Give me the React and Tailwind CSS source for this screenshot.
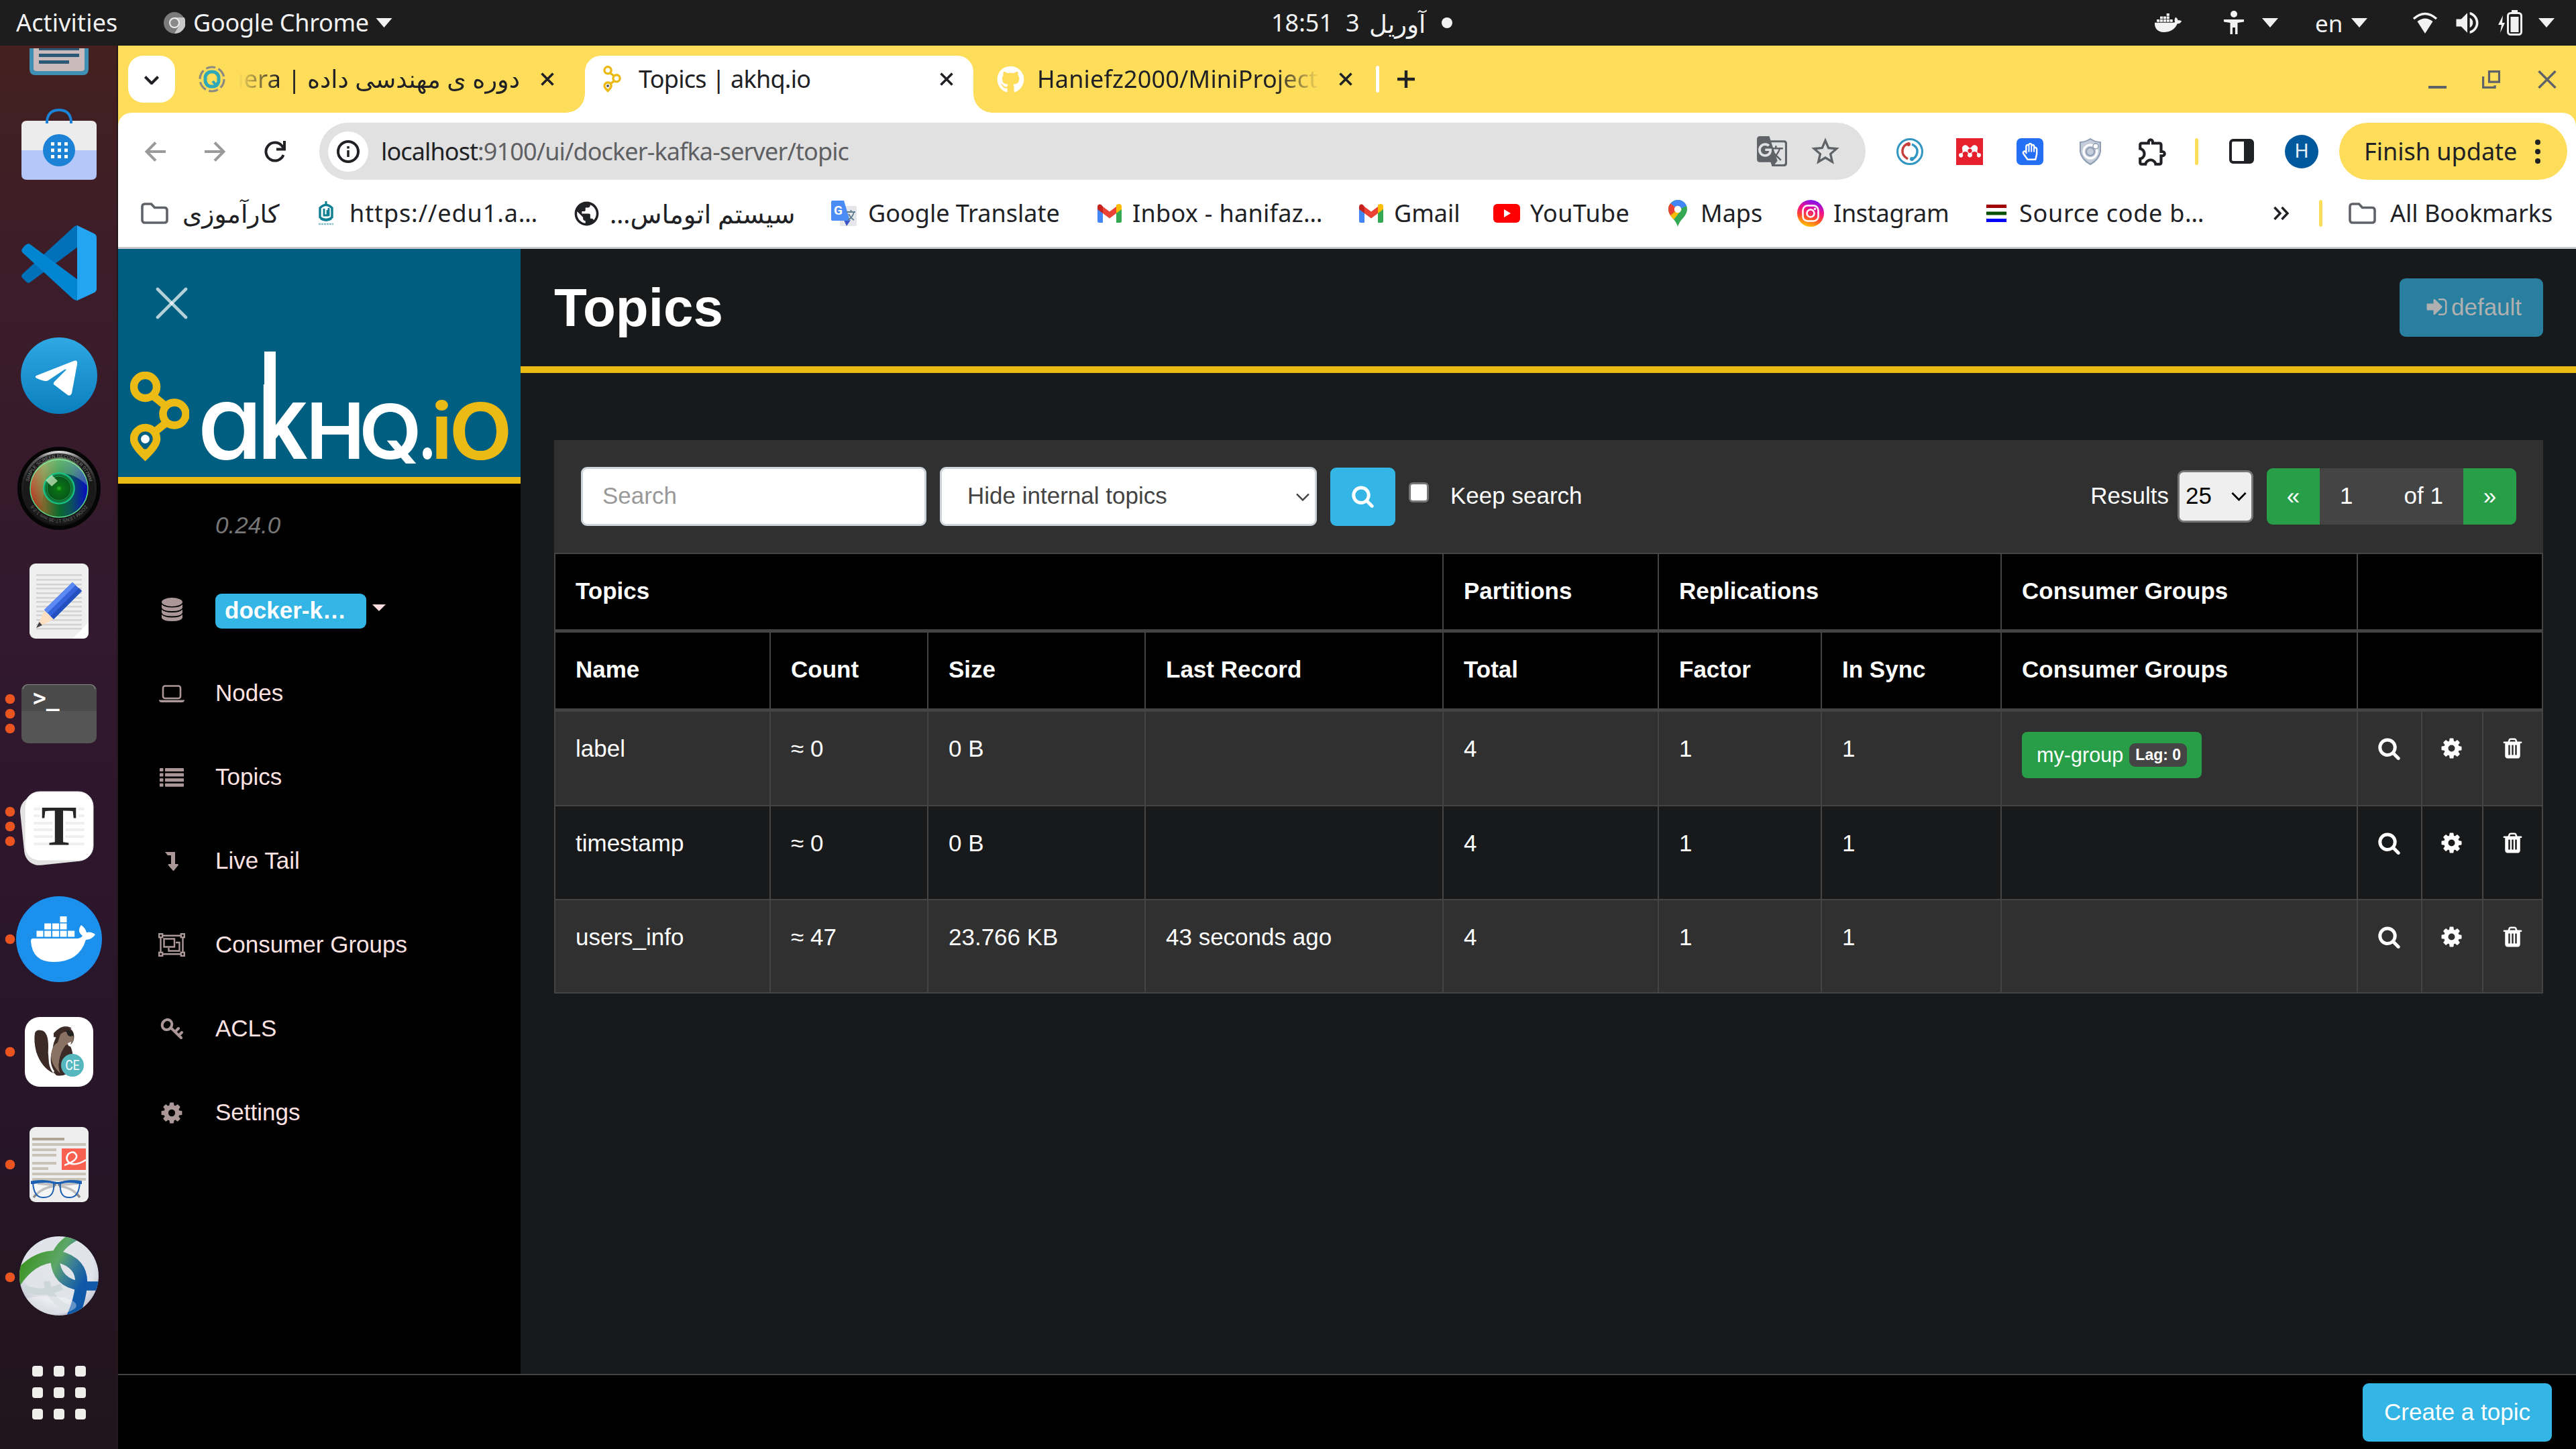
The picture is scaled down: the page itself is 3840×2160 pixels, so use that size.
import React from "react";
import { FaGithub, FaDocker, FaMendeley, FaRegHandPaper } from "react-icons/fa";
import { MdGTranslate, MdStarBorder, MdOutlineExtension, MdPublic, MdVolumeUp } from "react-icons/md";

/* ---------- Shared glyphs ---------- */

const FA = {
  search:
    "M1216 832q0-185-131.5-316.5t-316.5-131.5-316.5 131.5-131.5 316.5 131.5 316.5 316.5 131.5 316.5-131.5 131.5-316.5zm512 832q0 52-38 90t-90 38q-54 0-90-38l-343-342q-179 124-399 124-143 0-273.5-55.5t-225-150-150-225-55.5-273.5 55.5-273.5 150-225 225-150 273.5-55.5 273.5 55.5 225 150 150 225 55.5 273.5q0 220-124 399l343 343q37 37 37 90z",
  cog:
    "M1152 896q0-106-75-181t-181-75-181 75-75 181 75 181 181 75 181-75 75-181zm512-109v222q0 12-8 23t-20 13l-185 28q-19 54-39 91 35 50 107 138 10 12 10 25t-9 23q-27 37-99 108t-94 71q-12 0-26-9l-138-108q-44 23-91 38-16 136-29 186-7 28-36 28h-222q-14 0-24.5-8.5t-11.5-21.5l-28-184q-49-16-90-37l-141 107q-10 9-25 9-14 0-25-11-126-114-165-168-7-10-7-23 0-12 8-23 15-21 51-66.5t54-70.5q-27-50-41-99l-183-27q-13-2-21-12.5t-8-23.5v-222q0-12 8-23t19-13l186-28q14-46 39-92-40-57-107-138-10-12-10-24 0-10 9-23 26-36 98.5-107.5t94.5-71.5q13 0 26 10l138 107q44-23 91-38 16-136 29-186 7-28 36-28h222q14 0 24.5 8.5t11.5 21.5l28 184q49 16 90 37l142-107q9-9 24-9 13 0 25 10 129 119 165 170 7 8 7 22 0 12-8 23-15 21-51 66.5t-54 70.5q26 50 41 98l183 28q13 2 21 12.5t8 23.5z",
  trash:
    "M704 1376v-704q0-14-9-23t-23-9h-64q-14 0-23 9t-9 23v704q0 14 9 23t23 9h64q14 0 23-9t9-23zm256 0v-704q0-14-9-23t-23-9h-64q-14 0-23 9t-9 23v704q0 14 9 23t23 9h64q14 0 23-9t9-23zm256 0v-704q0-14-9-23t-23-9h-64q-14 0-23 9t-9 23v704q0 14 9 23t23 9h64q14 0 23-9t9-23zm-544-992h448l-48-117q-7-9-17-11h-317q-10 2-17 11zm928 32v64q0 14-9 23t-23 9h-96v948q0 83-47 143.5t-113 60.5h-832q-66 0-113-58.5t-47-141.5v-952h-96q-14 0-23-9t-9-23v-64q0-14 9-23t23-9h309l70-167q15-37 54-63t79-26h320q40 0 79 26t54 63l70 167h309q14 0 23 9t9 23z",
  signIn:
    "M1312 896q0 26-19 45l-544 544q-19 19-45 19t-45-19-19-45v-288h-448q-26 0-45-19t-19-45v-384q0-26 19-45t45-19h448v-288q0-26 19-45t45-19 45 19l544 544q19 19 19 45zm352-352v704q0 119-84.5 203.5t-203.5 84.5h-320q-13 0-22.5-9.5t-9.5-22.5q0-4-1-20t-.5-26.5 3-23.5 10-19.5 20.5-6.5h320q66 0 113-47t47-113v-704q0-66-47-113t-113-47h-312l-11.5-1-11.5-3-8-5.5-7-9-2-13.5q0-4-1-20t-.5-26.5 3-23.5 10-19.5 20.5-6.5h320q119 0 203.5 84.5t84.5 203.5z",
};

const Fa4 = ({ d, className }) => (
  <svg viewBox="0 0 1792 1792" className={className} fill="currentColor">
    <path d={d} />
  </svg>
);

const Caret = ({ className }) => (
  <svg viewBox="0 0 24 14" className={className} fill="#f2f2f2">
    <path d="M0 0h24L12 14z" />
  </svg>
);

const CloseX = ({ className }) => (
  <svg viewBox="0 0 20 20" className={className} stroke="#202124" strokeWidth="3.6" fill="none">
    <path d="M1.5 1.5l17 17M18.5 1.5l-17 17" />
  </svg>
);

const Chevron = ({ className, color, w }) => (
  <svg viewBox="0 0 24 14" className={className} stroke={color} strokeWidth={w} fill="none">
    <path d="M1.5 1.5L12 12.2 22.5 1.5" />
  </svg>
);

/* ---------- GNOME top bar ---------- */

function TopBar() {
  return (
    <header className="flex h-[68px] w-full shrink-0 items-center bg-[#1d1d1d] text-[36px] leading-none text-[#f2f2f2]">
      <div className="flex w-[1894px] items-center pl-[24px]">
        <span className="w-[220px] whitespace-nowrap tracking-[0.15px]">Activities</span>
        <svg viewBox="0 0 32 32" className="size-[32px]">
          <circle cx="16" cy="16" r="16" fill="#7b7b7b" />
          <path d="M16 8h14.500A16 16 0 0 1 16 32l7-12z" fill="#c9c9c9" />
          <circle cx="16" cy="16" r="8" fill="#eee" />
          <circle cx="16" cy="16" r="6" fill="#8a8a8a" />
        </svg>
        <span className="ml-[12px] w-[272px] whitespace-nowrap tracking-[-0.3px]">Google Chrome</span>
        <Caret className="h-[14px] w-[25px]" />
      </div>
      <div className="flex w-[272px] items-center">
        <span className="w-[112px] pl-[1px]">18:51</span>
        <span className="w-[35px]">3</span>
        <span className="w-[96px] text-[37px]">آوریل</span>
        <span className="ml-[12px] size-[16px] shrink-0 rounded-full bg-[#f2f2f2]" />
      </div>
      <div className="flex w-[1674px] items-center justify-end pr-[32px]">
        <FaDocker className="size-[40px]" />
        <svg viewBox="0 0 30 36" className="ml-[63px] h-[36px] w-[30px]" fill="#f2f2f2">
          <circle cx="15" cy="5" r="5" />
          <path d="M0 13h30v3.500l-9.500 1.500v17h-3.500v-10h-4v10H9.500V18L0 16.500z" />
        </svg>
        <Caret className="ml-[27px] h-[14px] w-[24px]" />
        <span className="ml-[55px] w-[54px] text-[35px]">en</span>
        <Caret className="h-[14px] w-[24px]" />
        <svg viewBox="0 0 38 32" className="ml-[67px] h-[32px] w-[38px]" fill="#f2f2f2">
          <path d="M2 10Q19-5 36 10" fill="none" stroke="#f2f2f2" strokeWidth="3.500" />
          <path d="M7.500 14Q19 5 30.500 14L19 32z" />
        </svg>
        <MdVolumeUp className="ml-[22px] size-[44px]" />
        <svg viewBox="0 0 36 38" className="ml-[24px] h-[38px] w-[36px]">
          <path d="M7 8L0 22h5l-2 12 7-15H6z" fill="#f2f2f2" />
          <rect x="14.500" y="4.500" width="20" height="32" rx="4" fill="none" stroke="#f2f2f2" strokeWidth="3" />
          <rect x="20" y="0" width="9" height="4" fill="#f2f2f2" />
          <rect x="18.500" y="10" width="12" height="23" fill="#f2f2f2" />
        </svg>
        <Caret className="ml-[24px] h-[14px] w-[24px]" />
      </div>
    </header>
  );
}

/* ---------- Dock ---------- */

const FilesIcon = () => (
  <g>
    <path d="M44 4h88v31q0 9-9 9H53q-9 0-9-9z" fill="#3f8fb5" />
    <path d="M50 4h76v30q0 4-5 4H55q-5 0-5-4z" fill="#cbbabb" />
    <path d="M58 4h60v3H58zM58 12h60v5H58zM58 22h45v5H58z" fill="#2c5878" />
  </g>
);

const SoftwareIcon = () => (
  <g>
    <path d="M32 48q0-8 8-8h96q8 0 8 8v36H32z" fill="#ececec" />
    <path d="M32 84h112v36q0 8-8 8H40q-8 0-8-8z" fill="#b5c7f9" />
    <path d="M70 44V40q2-16 18-16t18 16v4" fill="none" stroke="#1b82d6" strokeWidth="4" />
    <circle cx="88" cy="84" r="24" fill="#1b82d6" />
    {[76, 86, 96].map((x) => [72, 81.500, 91].map((y) => <rect key={`${x}-${y}`} x={x} y={y} width="5" height="5" fill="#fff" />))}
  </g>
);

const CodeIcon = () => (
  <g>
    <path d="M37 110L33 106Q31 103 34 100L107 33Q111 28 116 28V60L46 112Q43 115 40 113z" fill="#0070b8" />
    <path d="M37 58L33 63Q31 66 34 69L107 136Q111 140 116 140V109L46 57Q43 54 40 56z" fill="#0086d1" />
    <path d="M115 28L140 40Q144 42 144 46V123Q144 126 141 128L115 140z" fill="#24a5f2" />
  </g>
);

const TelegramIcon = () => (
  <g>
    <defs>
      <linearGradient id="tg" x1="0" y1="0" x2="0" y2="1">
        <stop offset="0" stopColor="#2fa8e4" />
        <stop offset="1" stopColor="#0b7fbe" />
      </linearGradient>
    </defs>
    <circle cx="88" cy="84" r="57" fill="url(#tg)" />
    <path d="M54 84L110 62Q116 60 115 67L107 110Q105 115 101 113L80 97Q79 95 81 93L99 75Q98 74 96 75L72 91Q68 94 55 88Q51 86 54 84z" fill="#fff" />
  </g>
);

const RecorderIcon = () => (
  <g>
    <defs>
      <linearGradient id="rim" x1="0" y1="0" x2="0" y2="1">
        <stop offset="0" stopColor="#e8e8e8" />
        <stop offset="0.1" stopColor="#5c5c5c" />
        <stop offset="0.4" stopColor="#222" />
        <stop offset="1" stopColor="#111" />
      </linearGradient>
      <linearGradient id="lensx" x1="0" y1="0" x2="1" y2="0">
        <stop offset="0" stopColor="#c01c10" />
        <stop offset="0.24" stopColor="#7a6a2c" />
        <stop offset="0.5" stopColor="#0c6a2c" />
        <stop offset="0.72" stopColor="#0b4f5e" />
        <stop offset="1" stopColor="#0709c4" />
      </linearGradient>
      <radialGradient id="lensc">
        <stop offset="0" stopColor="#0e7a12" />
        <stop offset="0.8" stopColor="#06551d" />
        <stop offset="1" stopColor="#21b97a" />
      </radialGradient>
      <linearGradient id="gloss" x1="0" y1="0" x2="0" y2="1">
        <stop offset="0" stopColor="#b8ffb0" stopOpacity="0.75" />
        <stop offset="1" stopColor="#b8ffb0" stopOpacity="0" />
      </linearGradient>
      <path id="ringTop" d="M42 84a46 46 0 0 1 92 0" />
      <path id="ringBottom" d="M134 84a46 46 0 0 1-92 0" />
    </defs>
    <circle cx="88" cy="84" r="62" fill="#050505" />
    <circle cx="88" cy="84" r="56" fill="url(#rim)" />
    <circle cx="88" cy="85" r="53" fill="#191919" />
    <text fontSize="7" fill="#858585" fontFamily="Liberation Sans" textAnchor="middle">
      <textPath href="#ringTop" startOffset="50%">SIMPLE SCREEN RECORDER  077MM</textPath>
    </text>
    <text fontSize="7" fill="#6a6a6a" fontFamily="Liberation Sans" textAnchor="middle">
      <textPath href="#ringBottom" startOffset="50%">ZOOM LENS  17-35 mm  1:2-8</textPath>
    </text>
    <circle cx="88" cy="84" r="43" fill="url(#lensx)" stroke="#5bd88a" strokeWidth="1.500" />
    <path d="M46 80A42 42 0 0 1 130 80Q110 60 88 62T62 116Q46 104 46 80z" fill="url(#gloss)" opacity="0.7" />
    <circle cx="88" cy="84" r="23" fill="url(#lensc)" stroke="#19c98d" strokeWidth="1.500" />
    <circle cx="88" cy="84" r="18" fill="none" stroke="#27a559" strokeWidth="1" />
    <circle cx="88" cy="84" r="3" fill="#1fa523" />
    <path d="M68 72l9-8 9 9-9 8z" fill="#e6ffd8" opacity="0.65" />
  </g>
);

const EditorIcon = () => (
  <g>
    <rect x="44" y="28" width="88" height="112" rx="9" fill="#efefef" />
    {[44, 51, 58, 64, 71, 78, 84, 91, 98, 104, 111, 118, 124].map((y) => (
      <rect key={y} x="54" y={y} width="68" height="2.500" fill="#d3d3d3" />
    ))}
    <path d="M132 116v15q0 9-9 9h-15z" fill="#fff" />
    <path d="M66 98L80 111 54.500 124z" fill="#fbdfc0" />
    <path d="M58.500 115L63 120 54 124z" fill="#444" />
    <path d="M108 56L122 69 80 111 66 97z" fill="#3263dd" />
    <path d="M108 56L112.500 60.500 70.500 102 66 97z" fill="#5d8af2" />
    <path d="M117.500 64.500L122 69 80 111 75.500 106.500z" fill="#2450bf" />
  </g>
);

const TerminalIcon = () => (
  <g>
    <rect x="32" y="40" width="112" height="88" rx="10" fill="#555" />
    <path d="M32 80V50q0-10 10-10h92q10 0 10 10v30z" fill="#4a4a4a" />
    <path d="M34 47q2-6.500 8-6.500h92q6 0 8 6.500" fill="none" stroke="#888" strokeWidth="1.200" />
    <text x="49" y="72" fontSize="33" fontWeight="700" fill="#fff" fontFamily="DejaVu Sans Mono">&gt;_</text>
  </g>
);

const TyporaIcon = () => (
  <g>
    <rect x="33" y="36" width="102" height="103" rx="22" fill="#e3e3e3" transform="rotate(-6 84 88)" />
    <rect x="37" y="32" width="102" height="103" rx="22" fill="#fff" stroke="#ddd" strokeWidth="1" />
    {[58, 68].map((y) => (
      <path key={y} d={`M52 ${y}h6M119 ${y}h5`} stroke="#efefef" strokeWidth="4" strokeLinecap="round" />
    ))}
    {[79, 89, 99, 110].map((y) => (
      <path key={y} d={`M52 ${y}h25M99 ${y}h25`} stroke="#efefef" strokeWidth="4" strokeLinecap="round" />
    ))}
    <text x="88" y="112" fontSize="85" fontWeight="700" fill="#262626" fontFamily="Liberation Serif" textAnchor="middle" textLength="53" lengthAdjust="spacingAndGlyphs">T</text>
  </g>
);

const DockerIcon = () => (
  <g>
    <circle cx="88" cy="84" r="64" fill="#1c90ed" />
    <path d="M49 83H116Q121 82 123 79Q114 72 121 63Q127 67 129 74Q136 72 142 77Q138 84 128 85Q118 118 80 118Q48 118 46 87Q46 83 49 83z" fill="#fff" />
    {[54.500, 66.200, 78, 89.500, 101.200].map((x) => (
      <rect key={x} x={x} y="71.500" width="10" height="9" fill="#fff" />
    ))}
    {[66.200, 78, 89.500].map((x) => (
      <rect key={x} x={x} y="60.500" width="10" height="9" fill="#fff" />
    ))}
    <rect x="89.500" y="50" width="10" height="9" fill="#fff" />
  </g>
);

const BeaverIcon = () => (
  <g>
    <rect x="37" y="32" width="102" height="104" rx="22" fill="#fff" />
    <path d="M52 56Q54 50 62 52Q72 54 72 76Q70 96 80 116Q62 108 54 84Q50 68 52 56z" fill="#3b2a25" />
    <path d="M80 56Q88 46 102 48Q112 52 110 66Q108 72 104 74Q112 88 106 108Q100 122 84 119Q72 108 76 88Q80 76 80 66z" fill="#3b2a25" />
    <path d="M90 58Q98 50 108 58Q112 66 106 72L98 74Q90 84 88 98Q86 108 90 116Q76 104 76 88Q78 74 86 70z" fill="#8a7263" />
    <path d="M98 52q10-1 12 7q-5 4-9 0z" fill="#222" />
    <path d="M82 62Q74 80 74 94Q74 106 80 114" fill="none" stroke="#fff" strokeWidth="3" />
    <path d="M84 54Q94 43 106 49" fill="none" stroke="#3b2a25" strokeWidth="1.500" />
    <path d="M101 71l5-2-1 7-3-1z" fill="#fff" />
    <circle cx="108" cy="104" r="17" fill="#56b7bf" />
    <text x="108" y="111" fontSize="21" fill="#fff" fontFamily="Roboto" textAnchor="middle" textLength="21" lengthAdjust="spacingAndGlyphs">CE</text>
  </g>
);

const ReaderIcon = () => (
  <g>
    <rect x="44" y="28" width="88" height="112" rx="9" fill="#eee" />
    <path d="M48 44h48v4H48z" fill="#ada592" />
    <path d="M48 52h80v4H48zM48 60h36v4H48zM48 68h36v4H48zM48 80h36v4H48zM48 88h24v4H48zM48 96h80v4H48zM48 104h80v4H48z" fill="#c8c3b4" />
    <rect x="92" y="60" width="36" height="32" fill="#f8604f" />
    <path d="M96 85Q116 78 114 70Q110 62 102 68Q96 76 104 82Q114 86 128 77" fill="none" stroke="#fff" strokeWidth="2.500" />
    <path d="M56 112Q70 114 84 114M116 112Q100 114 86 114M50 133Q62 118 82 116M119 133Q108 118 88 116" fill="none" stroke="#8a8a8a" strokeWidth="3.500" />
    <path d="M49 110Q64 106 80 111Q82 134 64 133Q50 133 49 110zM119 110Q104 106 90 111Q88 134 104 133Q118 133 119 110z" fill="#ffffff" fillOpacity="0.45" stroke="#1a5fb4" strokeWidth="2" />
    <path d="M46 108.500q18-3 36 1q4 1 8 0q18-4 32-1v4.500h-4q-14-4-28 0h-8q-14-4-32 0h-4z" fill="#1a5fb4" />
  </g>
);

const ConnectIcon = () => (
  <g>
    <defs>
      <clipPath id="orb">
        <circle cx="88" cy="82" r="59" />
      </clipPath>
      <radialGradient id="orbFill" cx="0.5" cy="0.4" r="0.62">
        <stop offset="0" stopColor="#e2e5e8" />
        <stop offset="0.7" stopColor="#e0e3ea" />
        <stop offset="1" stopColor="#bfc2cf" />
      </radialGradient>
      <linearGradient id="swoosh" gradientUnits="userSpaceOnUse" x1="36" y1="50" x2="122" y2="96">
        <stop offset="0" stopColor="#3c9420" />
        <stop offset="0.5" stopColor="#5da768" />
        <stop offset="0.72" stopColor="#3b7f95" />
        <stop offset="1" stopColor="#0f58a8" />
      </linearGradient>
    </defs>
    <circle cx="88" cy="82" r="59" fill="url(#orbFill)" />
    <g clipPath="url(#orb)" fill="none" stroke="url(#swoosh)">
      <path d="M36 100Q60 112 92 98M70 90Q72 120 110 134" strokeWidth="10" stroke="#cdd6d8" />
      <path d="M22 92Q48 52 86 53Q124 62 121 96Q119 122 104 152" strokeWidth="18" />
      <path d="M114 22Q86 36 82 58Q84 92 120 97L150 97" strokeWidth="13.500" />
      <ellipse cx="70" cy="126" rx="44" ry="14" fill="#fff" fillOpacity="0.35" stroke="none" />
    </g>
  </g>
);

const GridIcon = () => (
  <g fill="#eeeeec">
    {[48, 80, 112].map((x) => [48, 80, 112].map((y) => <rect key={`${x}-${y}`} x={x} y={y} width="16" height="16" rx="4" />))}
  </g>
);

const dockItems = [
  { Icon: SoftwareIcon, dots: 0 },
  { Icon: CodeIcon, dots: 0 },
  { Icon: TelegramIcon, dots: 0 },
  { Icon: RecorderIcon, dots: 0 },
  { Icon: EditorIcon, dots: 0 },
  { Icon: TerminalIcon, dots: 3 },
  { Icon: TyporaIcon, dots: 3 },
  { Icon: DockerIcon, dots: 1 },
  { Icon: BeaverIcon, dots: 1 },
  { Icon: ReaderIcon, dots: 1 },
  { Icon: ConnectIcon, dots: 1 },
  { Icon: GridIcon, dots: 0 },
];

function Dock() {
  return (
    <nav className="flex w-[176px] shrink-0 flex-col border-r-2 border-[#25181c] bg-[linear-gradient(180deg,#44201f_0%,#3d1d28_14%,#33192d_38%,#2b162c_62%,#261526_80%,#20151c_100%)]">
      <svg viewBox="0 0 176 72" className="h-[72px] w-[176px]">
        <FilesIcon />
      </svg>
      {dockItems.map(({ Icon, dots }, i) => (
        <svg key={i} viewBox="0 0 176 168" className="h-[168px] w-[176px]">
          <Icon />
          {dots === 1 && <circle cx="15" cy="84" r="7.300" fill="#e95420" />}
          {dots === 3 && [62, 84, 106].map((y) => <circle key={y} cx="15" cy={y} r="7.300" fill="#e95420" />)}
        </svg>
      ))}
    </nav>
  );
}

/* ---------- Browser chrome ---------- */

const AkhqMark = ({ className, dot = "#fff" }) => (
  <svg viewBox="0 0 88 134" className={className} fill="none" stroke="#ebba14" strokeWidth="11.500">
    <path d="M34 36L54 52M34 92L54 76" />
    <circle cx="22.500" cy="22.500" r="17" />
    <circle cx="66" cy="63" r="17" />
    <path d="M22.500 83.500a17 17 0 0 1 17 17q0 9-17 25q-17-16-17-25a17 17 0 0 1 17-17z" />
    <path d="M15 117h15l-7.500 8z" fill="#ebba14" strokeWidth="3" />
    <circle cx="22.500" cy="100.500" r="6.500" fill={dot} stroke="none" />
  </svg>
);

function Tabs() {
  return (
    <div className="flex h-[100px] shrink-0 bg-[#fedd5b] pt-[15px] text-[36px] leading-none text-[#202124]">
      <div className="flex w-[696px] items-start pl-[15px]">
        <div className="flex size-[70px] items-center justify-center rounded-[22px] bg-white">
          <Chevron className="mt-[2px] h-[13px] w-[22px]" color="#202124" w="4.500" />
        </div>
        <div className="flex h-[70px] items-center pl-[35px]">
          <svg viewBox="0 0 40 40" className="size-[40px]" fill="none">
            <circle cx="20" cy="20" r="18" stroke="#8a8a80" strokeWidth="3.200" strokeDasharray="14 4.850" />
            <rect x="10" y="9" width="20" height="22" rx="9" stroke="#2fa9b8" strokeWidth="5" />
            <path d="M21 23l7 8" stroke="#2fa9b8" strokeWidth="4" />
          </svg>
          <div
            dir="rtl"
            className="ml-[20px] h-[70px] w-[419px] overflow-hidden whitespace-nowrap text-[36.5px] leading-[68px] [mask-image:linear-gradient(90deg,transparent,black_60px)]"
          >
            دوره ی مهندسی داده | Quera
          </div>
          <CloseX className="ml-[31px] size-[20px]" />
        </div>
      </div>
      <div className="relative flex h-[85px] w-[579px] rounded-t-[24px] bg-white pl-[22px]">
        <div className="absolute -left-[28px] bottom-0 size-[28px] bg-[radial-gradient(circle_at_0_0,transparent_27.500px,white_28px)]" />
        <div className="absolute -right-[28px] bottom-0 size-[28px] bg-[radial-gradient(circle_at_100%_0,transparent_27.500px,white_28px)]" />
        <div className="flex h-[70px] items-center">
          <div className="flex w-[36px] justify-center">
            <AkhqMark className="h-[40px] w-[27px]" dot="#555" />
          </div>
          <span className="ml-[22px] w-[449px] whitespace-nowrap tracking-[-0.75px]">Topics | akhq.io</span>
          <CloseX className="size-[20px]" />
        </div>
      </div>
      <div className="flex h-[70px] items-center pl-[35px]">
        <FaGithub className="size-[41px] text-white" />
        <div className="ml-[19px] h-[70px] w-[421px] overflow-hidden whitespace-nowrap leading-[70px] tracking-[0.15px] [mask-image:linear-gradient(270deg,transparent,black_65px)]">
          Haniefz2000/MiniProject1
        </div>
        <CloseX className="ml-[29px] size-[20px]" />
        <div className="ml-[35px] h-[40px] w-[5px] rounded-full bg-white" />
        <svg viewBox="0 0 26 26" className="ml-[27px] size-[26px]" stroke="#202124" strokeWidth="4.400">
          <path d="M13 0v26M0 13h26" />
        </svg>
      </div>
      <div className="flex h-[70px] flex-1 items-center justify-end pr-[29px]">
        <svg viewBox="0 0 27 27" className="size-[27px]">
          <path d="M0 23h27v4H0z" fill="#5f6368" />
        </svg>
        <svg viewBox="0 0 27 27" className="ml-[53px] size-[27px]" fill="none" stroke="#5f6368" strokeWidth="3.200">
          <path d="M10.500 1.700h15v15.500h-15zM1.600 9v16.300h17.500v-3" />
        </svg>
        <svg viewBox="0 0 28 27" className="ml-[56px] h-[27px] w-[28px]" stroke="#5f6368" strokeWidth="3.500">
          <path d="M1.500 1l25 25M26.500 1l-25 25" />
        </svg>
      </div>
    </div>
  );
}

const Folder = () => (
  <svg viewBox="0 0 41 32" className="h-[32px] w-[41px] shrink-0" fill="none" stroke="#5f6368" strokeWidth="3.600">
    <path d="M6 2h9.500l5 5.500H35q4 0 4 4V26q0 4-4 4H6q-4 0-4-4V6q0-4 4-4z" />
  </svg>
);

const GmailIcon = () => (
  <svg viewBox="0 0 36 28" className="h-[28px] w-[36px]">
    <path d="M0 5v20.500Q0 28 2.500 28H8V11z" fill="#4285f4" />
    <path d="M36 5v20.500q0 2.500-2.500 2.500H28V11z" fill="#34a853" />
    <path d="M28 4v10l8-6V4q0-4-4-4-2 0-4 1.500z" fill="#fbbc04" />
    <path d="M8 14V4l10 7.500L28 4v10l-10 7.500z" fill="#ea4335" />
    <path d="M0 4v4l8 6V4L6 1.500Q4 0 2 .7 0 1.800 0 4z" fill="#c5221f" />
  </svg>
);

const TranslateIcon = () => (
  <svg viewBox="0 0 40 40" className="size-[40px]">
    <rect x="14" y="9" width="25" height="30" rx="2" fill="#e4e6ea" />
    <path d="M20 30l10 0-6 9z" fill="#3a53c5" />
    <path d="M3 1h17l9 30H3q-2 0-2-2V3q0-2 2-2z" fill="#4b8bf5" />
    <text x="5" y="22" fontSize="19" fontWeight="700" fill="#fff" fontFamily="Roboto">G</text>
    <path d="M24 18h13M30.500 15v3M35 18q-2 8-9 12M27 21q3 6 8 9" fill="none" stroke="#5c7b8c" strokeWidth="1.800" />
  </svg>
);

const bookmarks = [
  {
    w: "w-[256px]",
    label: "کارآموزی",
    text: "text-[37.5px] pl-[8px]",
    icon: <Folder />,
  },
  {
    w: "w-[388px]",
    label: "https://edu1.a…",
    text: "tracking-[0.9px] pl-[1px]",
    icon: (
      <svg viewBox="0 0 40 40" className="size-[40px]" fill="none" stroke="#0e7f93">
        <path d="M20 2v5" strokeWidth="3" />
        <path d="M11 12q9-9 18 0v14q-9 7-18 0z" strokeWidth="3.400" />
        <path d="M17 13v10h5v-8M24 12v12" strokeWidth="2.800" />
        <path d="M12 28q8 5 16 0" strokeWidth="3.200" />
        <path d="M9 36h22" strokeWidth="2.400" strokeDasharray="3 1" opacity="0.5" />
      </svg>
    ),
  },
  {
    w: "w-[384px]",
    label: "سیستم اتوماس…",
    text: "text-[38.5px] pl-[1px]",
    rtl: true,
    icon: <MdPublic className="size-[43px] shrink-0 text-[#202124]" />,
  },
  { w: "w-[396px]", label: "Google Translate", text: "pl-[2px]", icon: <TranslateIcon /> },
  { w: "w-[390px]", label: "Inbox - hanifaz…", text: "tracking-[0.3px]", icon: <GmailIcon /> },
  { w: "w-[202px]", label: "Gmail", text: "", icon: <GmailIcon /> },
  {
    w: "w-[255px]",
    label: "YouTube",
    text: "tracking-[0.4px] pl-[1px]",
    icon: (
      <svg viewBox="0 0 40 28" className="h-[28px] w-[40px]">
        <rect width="40" height="28" rx="6" fill="#f00" />
        <path d="M16 8l10 6-10 6z" fill="#fff" />
      </svg>
    ),
  },
  {
    w: "w-[198px]",
    label: "Maps",
    text: "",
    icon: (
      <svg viewBox="0 0 28 40" className="h-[40px] w-[28px]">
        <defs>
          <clipPath id="pin">
            <path d="M14 0a14 14 0 0 1 14 14q0 6-6 13-6 6-8 13-2-7-8-13-6-7-6-13A14 14 0 0 1 14 0z" />
          </clipPath>
        </defs>
        <g clipPath="url(#pin)">
          <path d="M0 0h28v40H0z" fill="#34a853" />
          <path d="M3 5L20 14 6 32-4 20z" fill="#fbbc04" />
          <path d="M3 5L14 14 2 24-4 16z" fill="#ea4335" />
          <path d="M3 5L14-2 30-2 20 12 14 14z" fill="#4285f4" />
          <path d="M18 0L30 8 20 12 14 14z" fill="#4285f4" />
          <circle cx="14" cy="14" r="5.200" fill="#fff" />
        </g>
      </svg>
    ),
  },
  {
    w: "w-[277px]",
    label: "Instagram",
    text: "tracking-[-0.3px]",
    icon: (
      <svg viewBox="0 0 40 40" className="size-[40px]">
        <defs>
          <linearGradient id="ig" x1="0.3" y1="1" x2="0.6" y2="0">
            <stop offset="0" stopColor="#ffd000" />
            <stop offset="0.35" stopColor="#ff4a2c" />
            <stop offset="0.65" stopColor="#f0108e" />
            <stop offset="1" stopColor="#7a14f5" />
          </linearGradient>
        </defs>
        <circle cx="20" cy="20" r="20" fill="url(#ig)" />
        <g fill="none" stroke="#fff" strokeWidth="2.600">
          <rect x="8.500" y="8.500" width="23" height="23" rx="7" />
          <circle cx="20" cy="20" r="5.500" />
        </g>
        <circle cx="26.500" cy="13.500" r="1.700" fill="#fff" />
      </svg>
    ),
  },
  {
    w: "w-[423px]",
    label: "Source code b…",
    text: "tracking-[0.7px]",
    icon: (
      <svg viewBox="0 0 30 26" className="h-[26px] w-[30px]">
        <path d="M0 0h30v5H0z" fill="#a00000" />
        <path d="M0 10.500h30v5H0z" fill="#005000" />
        <path d="M0 21h30v5H0z" fill="#00f" />
      </svg>
    ),
  },
];

function Toolbar() {
  return (
    <div className="h-[115px] shrink-0 bg-[#fedd5b]">
      <div className="flex h-[115px] items-center rounded-t-[20px] bg-white text-[36px] leading-none text-[#202124]">
        <svg viewBox="0 0 31 30" className="ml-[40px] h-[30px] w-[31px]" fill="none" stroke="#9a9a9b" strokeWidth="4">
          <path d="M31 15H3M16 1.500L2.500 15 16 28.500" />
        </svg>
        <svg viewBox="0 0 31 30" className="ml-[58px] h-[30px] w-[31px]" fill="none" stroke="#9a9a9b" strokeWidth="4">
          <path d="M0 15h28M15 1.500L28.500 15 15 28.500" />
        </svg>
        <svg viewBox="0 0 32 32" className="ml-[58px] size-[32px]" fill="none" stroke="#202124" strokeWidth="4">
          <path d="M28.500 21A13.500 13.500 0 1 1 26 7L29 11" />
          <path d="M30 0v12.500H18" />
        </svg>
        <div className="ml-[50px] flex h-[85px] w-[2305px] items-center rounded-full bg-[#e1e1e1] pl-[13px]">
          <div className="flex size-[60px] items-center justify-center rounded-full bg-white">
            <svg viewBox="0 0 34 34" className="size-[34px]" fill="none" stroke="#202124">
              <circle cx="17" cy="17" r="15" strokeWidth="4" />
              <path d="M17 15v10M17 9v3.500" strokeWidth="3.500" />
            </svg>
          </div>
          <span className="ml-[19px] flex-1 whitespace-nowrap tracking-[-0.89px]">
            localhost<span className="text-[#5f6063]">:9100/ui/docker-kafka-server/topic</span>
          </span>
          <MdGTranslate className="size-[49px] text-[#5f6368]" />
          <MdStarBorder className="ml-[30px] mr-[35px] size-[50px] text-[#5f6368]" />
        </div>
        <svg viewBox="0 0 40 40" className="ml-[46px] size-[40px]" fill="none">
          <circle cx="20" cy="20" r="18.500" stroke="#3196c2" strokeWidth="3" />
          <path d="M17 31Q8 26 9 18T18 8" stroke="#c6403e" strokeWidth="3.500" />
          <path d="M23 9Q32 13 31 21T22 32" stroke="#3196c2" strokeWidth="3.500" />
          <circle cx="18" cy="9" r="3" fill="#c6403e" />
          <circle cx="23" cy="31" r="3" fill="#3196c2" />
        </svg>
        <div className="ml-[49px] flex size-[40px] items-center justify-center bg-[#e7202e]">
          <FaMendeley className="size-[33px] text-white" />
        </div>
        <div className="ml-[50px] flex size-[40px] items-center justify-center rounded-[7px] bg-[#256ff5]">
          <FaRegHandPaper className="size-[26px] text-white" />
        </div>
        <svg viewBox="0 0 34 40" className="ml-[53px] h-[40px] w-[34px]" fill="none">
          <path d="M17 1q8 5 15 5v14q-2 12-15 19Q4 32 2 20V6q7 0 15-5z" fill="#c5cdda" stroke="#8f9db3" strokeWidth="2" />
          <circle cx="17" cy="20" r="10" stroke="#fff" strokeWidth="3" />
          <circle cx="17" cy="20" r="6" stroke="#8f9db3" strokeWidth="2" />
          <circle cx="25" cy="12" r="4" fill="#fff" stroke="#8f9db3" strokeWidth="1.500" />
        </svg>
        <MdOutlineExtension className="ml-[51px] size-[50px]" />
        <div className="ml-[38px] h-[40px] w-[5px] rounded-full bg-[#fedd5b]" />
        <svg viewBox="0 0 37 37" className="ml-[46px] size-[37px]">
          <rect x="2" y="2" width="33" height="33" rx="4" fill="none" stroke="#202124" strokeWidth="4" />
          <path d="M22 2h13v33H22z" fill="#202124" />
        </svg>
        <div className="ml-[46px] flex size-[50px] items-center justify-center rounded-full bg-[#00599d] font-['Roboto',sans-serif] text-[29px] text-[#e8eef5]">
          H
        </div>
        <div className="ml-[31px] flex h-[85px] w-[340px] items-center rounded-full bg-[#fedd5b] pl-[37px]">
          <span className="w-[255px] whitespace-nowrap">Finish update</span>
          <svg viewBox="0 0 8 36" className="h-[36px] w-[8px]" fill="#202124">
            <circle cx="4" cy="4" r="4" />
            <circle cx="4" cy="18" r="4" />
            <circle cx="4" cy="32" r="4" />
          </svg>
        </div>
      </div>
    </div>
  );
}

function Bookmarks() {
  return (
    <div className="flex h-[88px] shrink-0 items-start border-b-[3px] border-[#c8cacb] bg-white pl-[34px] text-[36px] leading-none text-[#202124]">
      {bookmarks.map((b, i) => (
        <div key={i} className={`${b.w} flex h-[70px] shrink-0 items-center gap-[14px]`}>
          <div className="flex w-[40px] shrink-0 justify-center">{b.icon}</div>
          <span dir={b.rtl ? "rtl" : "ltr"} className={`${b.text} whitespace-nowrap`}>
            {b.label}
          </span>
        </div>
      ))}
      <div className="flex h-[70px] w-[455px] shrink-0 items-center pl-[10px]">
        <svg viewBox="0 0 24 20" className="h-[20px] w-[24px]" fill="none" stroke="#202124" strokeWidth="3.500">
          <path d="M1.500 1L10 10 1.500 19M12.500 1L21 10 12.500 19" />
        </svg>
        <div className="ml-[44px] mr-[39px] h-[40px] w-[5px] rounded-full bg-[#fedd5b]" />
        <Folder />
        <span className="ml-[21px] whitespace-nowrap">All Bookmarks</span>
      </div>
    </div>
  );
}

/* ---------- AKHQ sidebar ---------- */

const menuIcons = {
  nodes: (
    <svg viewBox="0 0 38 26" className="h-[26px] w-[38px]" fill="none" stroke="#ab9797">
      <rect x="6" y="1.500" width="26" height="18.500" rx="3" strokeWidth="2.600" />
      <path d="M0 22.500h38v1Q37 26 34 26H4q-3 0-4-2.500z" fill="#ab9797" stroke="none" />
    </svg>
  ),
  topics: (
    <svg viewBox="0 0 36 28" className="h-[28px] w-[36px]" fill="#ab9797">
      {[0, 7.600, 15.200, 22.800].map((y) => (
        <g key={y}>
          <rect x="0" y={y} width="5.500" height="5" rx="1" />
          <rect x="8" y={y} width="28" height="5" rx="0.800" />
        </g>
      ))}
    </svg>
  ),
  tail: (
    <svg viewBox="0 0 20 28" className="h-[28px] w-[20px]" fill="#ab9797">
      <path d="M0 0h14.500q.5 0 .5.500V18h4q1.500.500.500 2L13.500 27.500q-1 1-2 0L5 20q-1-1.500.500-2H9V5H4z" />
    </svg>
  ),
  groups: (
    <svg viewBox="0 0 40 35" className="h-[35px] w-[40px]" fill="none" stroke="#ab9797" strokeWidth="2.400">
      <path d="M7 3.800h26M7 31.200h26M3.500 7v21M36.500 7v21" />
      <rect x="1.200" y="1.200" width="5" height="5" />
      <rect x="33.800" y="1.200" width="5" height="5" />
      <rect x="1.200" y="28.800" width="5" height="5" />
      <rect x="33.800" y="28.800" width="5" height="5" />
      <path d="M8.500 8.500h15.500v12H8.500zM26 14h5.500v12.500H15.500V22" />
    </svg>
  ),
  acls: (
    <svg viewBox="0 0 34 32" className="h-[32px] w-[34px]" fill="none" stroke="#ab9797" strokeWidth="4">
      <ellipse cx="10" cy="9.500" rx="7" ry="7.800" transform="rotate(35 10 9.500)" />
      <path d="M15.500 14L31 29M22 20l5-5M27.500 25.500l4.500-4.500" strokeLinecap="round" />
    </svg>
  ),
  settings: <Fa4 d={FA.cog} className="size-[36px] text-[#ab9797]" />,
};

const menu = [
  { icon: menuIcons.nodes, label: "Nodes" },
  { icon: menuIcons.topics, label: "Topics" },
  { icon: menuIcons.tail, label: "Live Tail" },
  { icon: menuIcons.groups, label: "Consumer Groups" },
  { icon: menuIcons.acls, label: "ACLS" },
  { icon: menuIcons.settings, label: "Settings" },
];

const logoLetters = [
  { c: "a", x: 118, size: 153, len: 98, fill: "#fff", weight: 500 },
  { c: "k", x: 208, size: 153, len: 75, fill: "#fff", weight: 600 },
  { c: "H", x: 280, size: 115, len: 88, fill: "#fff", weight: 600 },
  { c: "Q", x: 359, size: 112, len: 94, fill: "#fff", weight: 600 },
  { c: ".", x: 447, size: 115, len: 28, fill: "#fff", weight: 600 },
  { c: "i", x: 466, size: 115, len: 33, fill: "#ebba14", weight: 600 },
  { c: "o", x: 492, size: 153, len: 97, fill: "#ebba14", weight: 500 },
];

function Sidebar() {
  return (
    <aside className="flex w-[600px] shrink-0 flex-col bg-black text-[35px] leading-none text-[#ffe3e3]">
      <div className="flex h-[350px] shrink-0 flex-col border-b-[10px] border-[#ebba14] bg-[#005f80]">
        <svg viewBox="0 0 48 48" className="ml-[56px] mt-[57px] size-[48px]" stroke="#fff" strokeOpacity="0.7" strokeWidth="4.600" strokeLinecap="round">
          <path d="M3 3l42 42" />
          <path d="M45 3L3 45" />
        </svg>
        <div className="mt-[46px] flex h-[170px]">
          <div className="w-0">
            <AkhqMark className="ml-[18px] mt-[32px] h-[134px] w-[88px]" />
          </div>
          <svg viewBox="0 0 600 170" className="h-[170px] w-[600px]">
            <rect x="218" y="2" width="17" height="160" fill="#fff" />
            <text y="162" fontFamily="Inter" style={{ fontFeatureSettings: '"cv11"' }}>
              {logoLetters.map((l) => (
                <tspan key={l.c} x={l.x} fontSize={l.size} fontWeight={l.weight} fill={l.fill} textLength={l.len} lengthAdjust="spacingAndGlyphs">
                  {l.c}
                </tspan>
              ))}
            </text>
          </svg>
        </div>
      </div>
      <div className="flex h-[125px] items-center pb-[2px] pl-[145px] italic text-[#777]">0.24.0</div>
      <div className="flex h-[125px] items-center">
        <div className="flex w-[160px] justify-center">
          <svg viewBox="0 0 31 36" className="h-[36px] w-[31px]" fill="#ab9797">
            <ellipse cx="15.500" cy="6.500" rx="15.500" ry="6.500" />
            {[10, 17.500, 25].map((y) => (
              <path key={y} d={`M0 ${y}Q4 ${y + 4.5} 15.500 ${y + 4.5}T31 ${y}V${y + 5}Q29 ${y + 10} 15.500 ${y + 10}T0 ${y + 5}z`} />
            ))}
          </svg>
        </div>
        <div className="ml-[-15px] mt-[4px] flex h-[52px] w-[225px] items-center rounded-[9px] bg-[#33b5e5] pb-[2px] pl-[14px] font-bold text-white">
          docker-k…
        </div>
        <svg viewBox="0 0 20 10" className="mb-[5px] ml-[9px] h-[10px] w-[20px]" fill="#ffdcdc">
          <path d="M0 0h20L10 10z" />
        </svg>
      </div>
      {menu.map((m) => (
        <div key={m.label} className="flex h-[125px] items-center">
          <div className="flex w-[160px] justify-center">{m.icon}</div>
          <span className="ml-[-15px] pb-[2px]">{m.label}</span>
        </div>
      ))}
    </aside>
  );
}

/* ---------- Topics page ---------- */

const cell = "border-l-2 border-[#444] pl-[30px]";

function HeadCell({ w, children }) {
  return <div className={`${w} ${cell} flex h-full shrink-0 items-center pb-[4px]`}>{children}</div>;
}

const rows = [
  { name: "label", count: "≈ 0", size: "0 B", last: "", group: true, bg: "bg-[#303030]", h: "h-[141px]" },
  { name: "timestamp", count: "≈ 0", size: "0 B", last: "", group: false, bg: "bg-[#17191a]", h: "h-[140px]" },
  { name: "users_info", count: "≈ 47", size: "23.766 KB", last: "43 seconds ago", group: false, bg: "bg-[#303030]", h: "h-[139px]" },
];

function Row({ r }) {
  return (
    <div className={`${r.bg} ${r.h} flex border-b-2 border-r-2 border-[#444] leading-[52px] text-white`}>
      <div className={`w-[321px] pt-[29px] ${cell}`}>{r.name}</div>
      <div className={`w-[235px] pt-[29px] ${cell}`}>{r.count}</div>
      <div className={`w-[324px] pt-[29px] ${cell}`}>{r.size}</div>
      <div className={`w-[444px] pt-[29px] ${cell}`}>{r.last}</div>
      <div className={`w-[321px] pt-[29px] ${cell}`}>4</div>
      <div className={`w-[243px] pt-[29px] ${cell}`}>1</div>
      <div className={`w-[268px] pt-[29px] ${cell}`}>1</div>
      <div className={`w-[531px] pt-[30px] ${cell}`}>
        {r.group && (
          <div className="flex h-[69px] w-[268px] items-center rounded-[8px] bg-[#289e48] pl-[22px] text-[30.6px] leading-none">
            my-group
            <span className="ml-[9px] flex h-[35px] w-[86px] items-center justify-center rounded-[9px] bg-[#444] text-[23px] font-bold">
              Lag: 0
            </span>
          </div>
        )}
      </div>
      <div className="flex w-[96px] justify-center border-l-2 border-[#444] pr-[2px] pt-[37px]">
        <Fa4 d={FA.search} className="size-[35px]" />
      </div>
      <div className="flex w-[91px] justify-center border-l-2 border-[#444] pr-[2px] pt-[37px]">
        <Fa4 d={FA.cog} className="size-[35px]" />
      </div>
      <div className="flex w-[89px] justify-center border-l-2 border-[#444] pt-[37px]">
        <Fa4 d={FA.trash} className="size-[35px]" />
      </div>
    </div>
  );
}

function FilterBar() {
  return (
    <div className="flex h-[168px] items-center bg-[#303030] pl-[40px] pr-[40px] text-white">
      <input
        placeholder="Search"
        className="h-[88px] w-[515px] rounded-[9px] border-[3px] border-[#ced4da] bg-white px-[29px] pb-[3px] placeholder:text-[#999]"
      />
      <div className="ml-[20px] flex h-[88px] w-[562px] items-center justify-between rounded-[9px] border-[3px] border-[#ced4da] bg-white pb-[3px] pl-[38px] pr-[7px] text-[#444]">
        Hide internal topics
        <Chevron className="mt-[4px] h-[12px] w-[22px]" color="#444" w="2.800" />
      </div>
      <div className="ml-[20px] flex h-[87px] w-[97px] items-center justify-center rounded-[9px] bg-[#33b5e5]">
        <Fa4 d={FA.search} className="mt-[-2px] size-[35px]" />
      </div>
      <div className="mb-[12px] ml-[20px] size-[30px] rounded-[6px] border-[3px] border-[#767676] bg-white" />
      <span className="mb-[4px] ml-[32px]">Keep search</span>
      <div className="flex flex-1 items-center justify-end">
        <span className="mb-[4px]">Results</span>
        <div className="ml-[13px] flex h-[78px] w-[113px] items-center justify-between rounded-[9px] border-[3px] border-[#767676] bg-[#efefef] pb-[4px] pl-[9px] pr-[7px] text-black">
          25
          <Chevron className="mt-[3px] h-[14px] w-[23px]" color="#000" w="2.800" />
        </div>
        <div className="ml-[20px] flex h-[84px] overflow-hidden rounded-[9px] bg-[#444] pb-0">
          <div className="flex w-[79px] items-center justify-center bg-[#289e48] pb-[3px]">«</div>
          <div className="flex w-[214px] items-center justify-between pb-[4px] pl-[30px] pr-[30px]">
            <span>1</span>
            <span>of 1</span>
          </div>
          <div className="flex w-[79px] items-center justify-center bg-[#289e48] pb-[3px]">»</div>
        </div>
      </div>
    </div>
  );
}

function Main() {
  return (
    <main className="flex flex-1 flex-col bg-[#17191a] text-[35px] leading-none">
      <div className="flex h-[185px] shrink-0 items-start justify-between border-b-[10px] border-[#ebba14] pl-[50px] pr-[49px]">
        <h1 className="mt-[49px] text-[80px] font-bold leading-[77px] text-white">Topics</h1>
        <div className="mt-[44px] flex h-[87px] w-[214px] items-center rounded-[9px] bg-[#297f9f] pl-[38px] text-[#b0b0b0]">
          <Fa4 d={FA.signIn} className="mb-[3px] size-[35px]" />
          <span className="mb-[3px] ml-[4px]">default</span>
        </div>
      </div>
      <div className="ml-[50px] mt-[100px] w-[2965px]">
        <FilterBar />
        <div className="flex h-[119px] border-b-[5px] border-r-2 border-t-2 border-[#444] bg-black font-bold text-white">
          <HeadCell w="w-[1324px]">Topics</HeadCell>
          <HeadCell w="w-[321px]">Partitions</HeadCell>
          <HeadCell w="w-[511px]">Replications</HeadCell>
          <HeadCell w="w-[531px]">Consumer Groups</HeadCell>
          <HeadCell w="w-[276px]" />
        </div>
        <div className="flex h-[118px] border-b-[5px] border-r-2 border-[#444] bg-black pb-0 font-bold text-white">
          <HeadCell w="w-[321px]">Name</HeadCell>
          <HeadCell w="w-[235px]">Count</HeadCell>
          <HeadCell w="w-[324px]">Size</HeadCell>
          <HeadCell w="w-[444px]">Last Record</HeadCell>
          <HeadCell w="w-[321px]">Total</HeadCell>
          <HeadCell w="w-[243px]">Factor</HeadCell>
          <HeadCell w="w-[268px]">In Sync</HeadCell>
          <HeadCell w="w-[531px]">Consumer Groups</HeadCell>
          <HeadCell w="w-[276px]" />
        </div>
        {rows.map((r) => (
          <Row key={r.name} r={r} />
        ))}
      </div>
    </main>
  );
}

export default function App() {
  return (
    <div className="flex h-[2160px] w-[3840px] flex-col overflow-hidden bg-black font-['Noto_Sans','DejaVu_Sans',sans-serif]">
      <TopBar />
      <div className="flex min-h-0 flex-1">
        <Dock />
        <div className="flex w-[3664px] flex-col">
          <Tabs />
          <Toolbar />
          <Bookmarks />
          <div className="flex min-h-0 flex-1 flex-col font-['Liberation_Sans',sans-serif]">
            <div className="flex min-h-0 flex-1 overflow-hidden">
              <Sidebar />
              <Main />
            </div>
            <footer className="flex h-[112px] shrink-0 items-start justify-end border-t-2 border-[#444] bg-black pr-[36px] pt-[12px]">
              <div className="flex h-[87px] w-[282px] items-center justify-center rounded-[9px] bg-[#33b5e5] pb-[3px] text-[35px] leading-none text-white">
                Create a topic
              </div>
            </footer>
          </div>
        </div>
      </div>
    </div>
  );
}
